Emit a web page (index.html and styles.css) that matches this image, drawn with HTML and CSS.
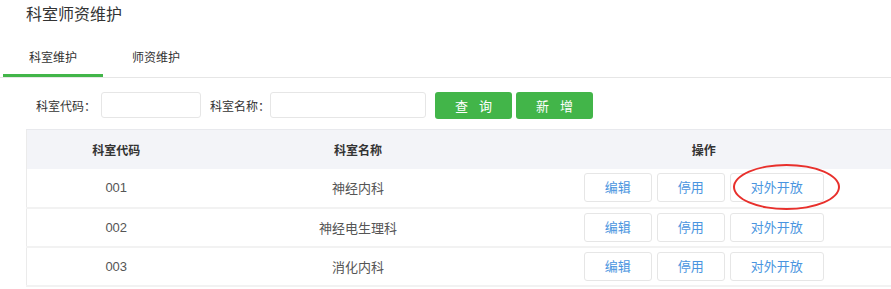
FILE: index.html
```html
<!DOCTYPE html>
<html>
	<head>
		<meta charset="UTF-8">
		<title>科室师资维护</title>
		<link rel="stylesheet" href="styles.css">
	</head>
	<body>
		<div class="page">
			<h1 class="title">科室师资维护</h1>
			<ul class="tabs">
				<li class="current">科室维护</li>
				<li>师资维护</li>
			</ul>
			<div class="search">
				<label>科室代码：</label>
				<input type="text" class="ipt-code" />
				<label>科室名称：</label>
				<input type="text" class="ipt-name" />
				<button class="btn-green">查&nbsp;&nbsp;&nbsp;询</button>
				<button class="btn-green">新&nbsp;&nbsp;&nbsp;增</button>
			</div>
			<table class="list">
				<thead>
					<tr>
						<th class="c1">科室代码</th>
						<th class="c2">科室名称</th>
						<th>操作</th>
					</tr>
				</thead>
				<tbody>
					<tr>
						<td>001</td>
						<td>神经内科</td>
						<td>
							<div class="ops">
								<a class="op">编辑</a><a class="op">停用</a><a class="op wide marked">对外开放</a>
							</div>
						</td>
					</tr>
					<tr>
						<td>002</td>
						<td>神经电生理科</td>
						<td>
							<div class="ops">
								<a class="op">编辑</a><a class="op">停用</a><a class="op wide">对外开放</a>
							</div>
						</td>
					</tr>
					<tr>
						<td>003</td>
						<td>消化内科</td>
						<td>
							<div class="ops">
								<a class="op">编辑</a><a class="op">停用</a><a class="op wide">对外开放</a>
							</div>
						</td>
					</tr>
				</tbody>
			</table>
		</div>
	</body>
</html>
```

FILE: styles.css
```css
* {
	margin: 0;
	padding: 0;
	box-sizing: border-box;
}

body {
	background: #fff;
	font-family: "Liberation Sans", "Noto Sans CJK SC", sans-serif;
	font-size: 13px;
	color: #333;
	overflow: hidden;
}

.page {
	width: 900px;
}

.title {
	font-size: 16px;
	font-weight: normal;
	line-height: 20px;
	padding: 5px 0 0 26px;
	color: #333;
}

.tabs {
	list-style: none;
	display: flex;
	gap: 3px;
	padding-left: 3px;
	margin-top: 19px;
	border-bottom: 1px solid #e6e6e6;
}

.tabs li {
	width: 100px;
	height: 33px;
	line-height: 28px;
	text-align: center;
	font-size: 12px;
	color: #333;
}

.tabs li.current {
	border-bottom: 3px solid #42b549;
	margin-bottom: -1px;
}

.search {
	display: flex;
	align-items: center;
	padding: 6px 0 0 36px;
	height: 42px;
	box-sizing: content-box;
}

.search label {
	font-size: 12px;
	color: #333;
	margin-right: 5px;
}

.search input {
	height: 26px;
	border: 1px solid #e6e6e6;
	border-radius: 3px;
	outline: none;
	margin-right: 9px;
}

.ipt-code {
	width: 100px;
}

.ipt-name {
	width: 156px;
	margin-left: -5px;
}

.btn-green {
	width: 77px;
	height: 27px;
	border: none;
	border-radius: 3px;
	background: #42b549;
	color: #fff;
	font-family: inherit;
	font-size: 13px;
	margin-right: 4px;
}

.list {
	margin: 3px 0 0 26px;
	width: 871px;
	border-collapse: collapse;
	border-left: 1px solid #ebebeb;
	table-layout: fixed;
}

.list th {
	height: 39px;
	background: #f3f4f8;
	border-top: 1px solid #e8e9ed;
	font-weight: bold;
	font-size: 12px;
	color: #333;
}

.list .c1 {
	width: 179px;
}

.list .c2 {
	width: 305px;
}

.list td {
	height: 39px;
	text-align: center;
	font-size: 13px;
	color: #555;
	border-bottom: 2px solid #f2f2f2;
}

.ops {
	display: flex;
	justify-content: center;
	gap: 5px;
}

.op {
	display: block;
	width: 68px;
	height: 29px;
	line-height: 27px;
	border: 1px solid #e6e6e6;
	border-radius: 3px;
	color: #4a95e0;
	font-size: 13px;
	position: relative;
}

.op.wide {
	width: 94px;
}

/* 红圈标注 */
.marked::after {
	content: "";
	position: absolute;
	left: 2px;
	top: -10px;
	width: 103px;
	height: 42px;
	border: 2px solid #e8302c;
	border-radius: 50%;
}
```
